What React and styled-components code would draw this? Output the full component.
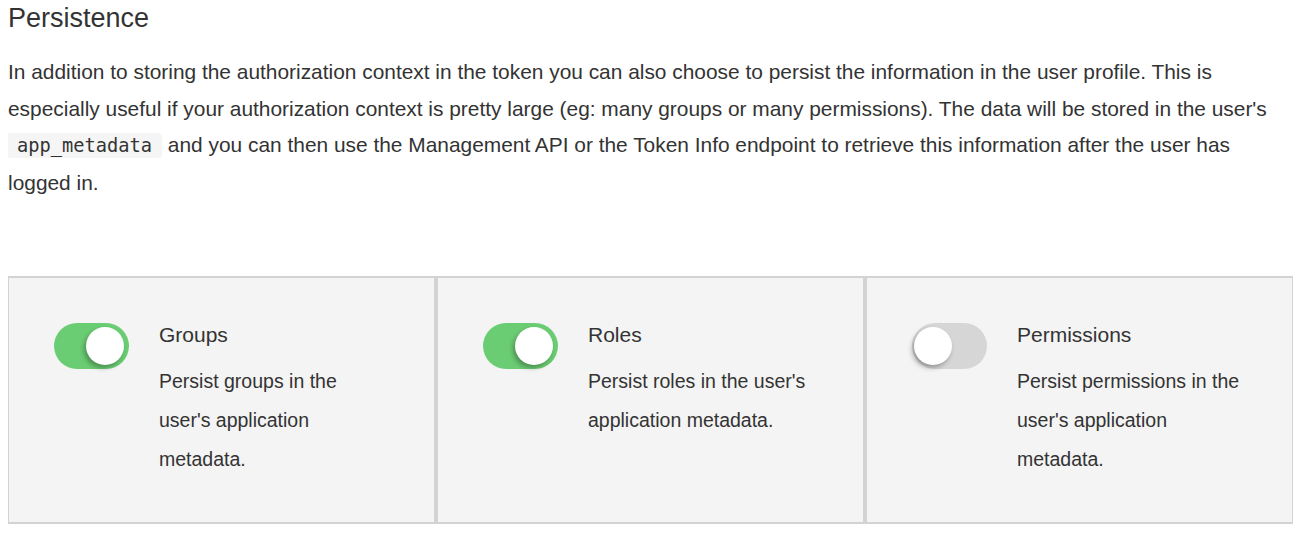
import React, { useState } from "react";
import styled, { createGlobalStyle } from "styled-components";

const GlobalStyle = createGlobalStyle`
    body {
        margin: 0 8px;
        background: #fff;
        font-family: "Liberation Sans", Arial, sans-serif;
        color: #333;
    }
`;

const options = [
    {
        key: "groups",
        title: "Groups",
        text: "Persist groups in the user's application metadata.",
        on: true,
    },
    {
        key: "roles",
        title: "Roles",
        text: "Persist roles in the user's application metadata.",
        on: true,
    },
    {
        key: "permissions",
        title: "Permissions",
        text: "Persist permissions in the user's application metadata.",
        on: false,
    },
];

export default function App() {
    const [state, setState] = useState(
        Object.fromEntries(options.map((o) => [o.key, o.on]))
    );
    return (
        <>
            <GlobalStyle />
            <Heading>Persistence</Heading>
            <Intro>
                In addition to storing the authorization context in the token
                you can also choose to persist the information in the user
                profile. This is especially useful if your authorization
                context is pretty large (eg: many groups or many permissions).
                The data will be stored in the user's <Code>app_metadata</Code>{" "}
                and you can then use the Management API or the Token Info
                endpoint to retrieve this information after the user has logged
                in.
            </Intro>
            <Cards>
                {options.map((o) => (
                    <Card key={o.key}>
                        <Toggle
                            $on={state[o.key]}
                            onClick={() =>
                                setState({ ...state, [o.key]: !state[o.key] })
                            }
                        >
                            <Knob $on={state[o.key]} />
                        </Toggle>
                        <Body>
                            <Title>{o.title}</Title>
                            <Desc>{o.text}</Desc>
                        </Body>
                    </Card>
                ))}
            </Cards>
        </>
    );
}

const Heading = styled.h2`
    margin: 0;
    font-size: 27px;
    font-weight: normal;
    line-height: 36px;
    color: #333;
`;
const Intro = styled.p`
    margin: 18px 0 0;
    font-size: 20.9px;
    line-height: 36.7px;
`;
const Code = styled.code`
    font-family: "DejaVu Sans Mono", "Liberation Mono", monospace;
    font-size: 18.7px;
    background: #f5f5f5;
    border-radius: 4px;
    padding: 2px 10px;
    margin-left: -1px;
`;
const Cards = styled.div`
    display: flex;
    margin: 74px -1px 0;
`;
const Card = styled.div`
    box-sizing: border-box;
    flex: 1;
    display: flex;
    align-items: flex-start;
    gap: 30px;
    height: 248px;
    padding: 44px 44px 0 45px;
    background: #f4f4f4;
    border: 2px solid #d3d3d3;
`;
const Toggle = styled.div`
    position: relative;
    flex: none;
    width: 75px;
    height: 46px;
    margin-top: 1px;
    border-radius: 23px;
    cursor: pointer;
    background: ${(p) => (p.$on ? "#6bcd73" : "#d6d6d6")};
`;
const Knob = styled.span`
    position: absolute;
    top: 4px;
    left: ${(p) => (p.$on ? "32px" : "2px")};
    width: 38px;
    height: 38px;
    border-radius: 50%;
    background: #fff;
    box-shadow: -2px 3px 5px rgba(0, 0, 0, 0.3);
`;
const Body = styled.div`
    flex: 1;
`;
const Title = styled.div`
    font-size: 21px;
    line-height: 24px;
    margin: 1px 0 15px;
`;
const Desc = styled.div`
    font-size: 19.5px;
    line-height: 39px;
`;
